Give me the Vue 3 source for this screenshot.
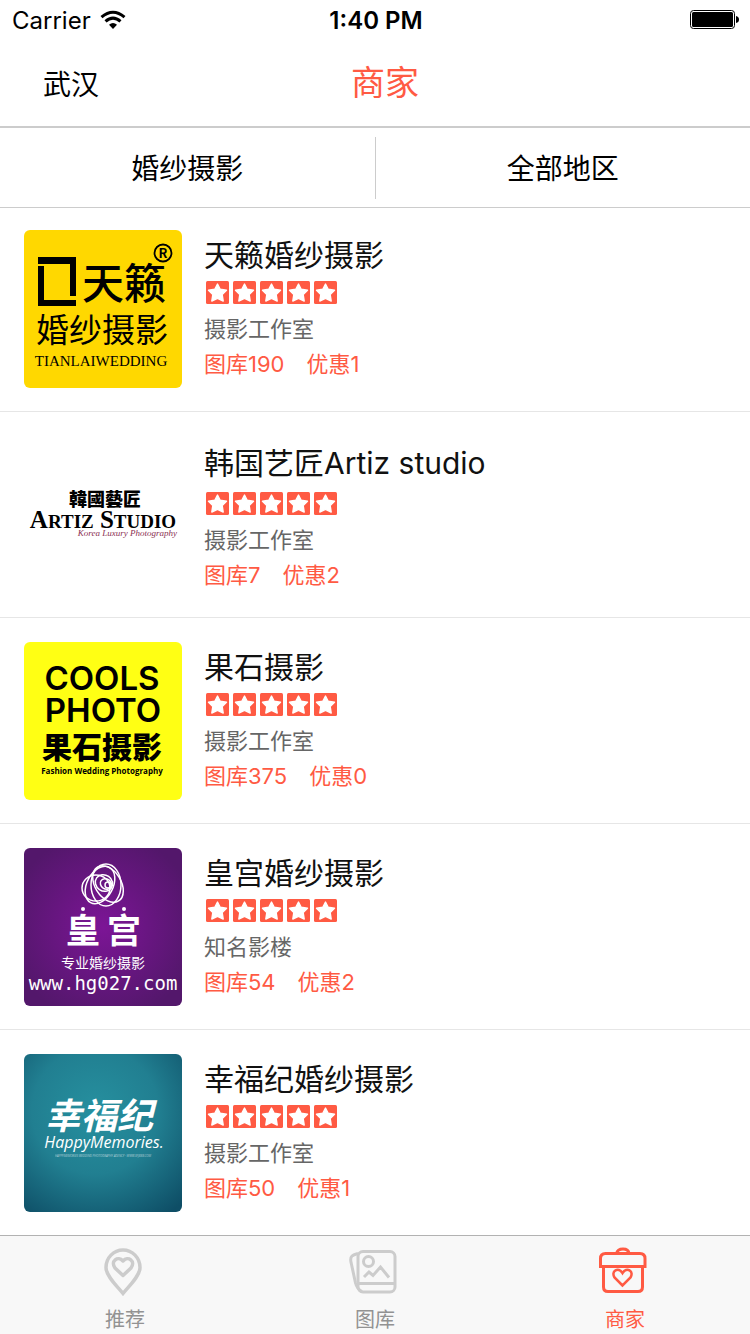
<script setup>
const shops = [
  { name: '天籁婚纱摄影', logo: 'tianlai', kind: '摄影工作室', photos: 190, deals: 1 },
  { name: '韩国艺匠Artiz studio', logo: 'artiz', kind: '摄影工作室', photos: 7, deals: 2, mixed: true },
  { name: '果石摄影', logo: 'cools', kind: '摄影工作室', photos: 375, deals: 0 },
  { name: '皇宫婚纱摄影', logo: 'palace', kind: '知名影楼', photos: 54, deals: 2 },
  { name: '幸福纪婚纱摄影', logo: 'happy', kind: '摄影工作室', photos: 50, deals: 1 },
]
</script>

<template>
  <div class="page">
    <header>
      <div class="status">
        <div class="carrier">
          <span>Carrier</span>
          <svg width="26" height="20" viewBox="0 0 26 20" aria-label="Wi-Fi">
            <path d="M1.500 7.200Q13-2.800 24.500 7.200" fill="none" stroke="#000" stroke-width="3" />
            <path d="M5.500 11.400Q13 4.800 20.500 11.400" fill="none" stroke="#000" stroke-width="3" />
            <path d="M9 14.800Q13 11 17 14.800L13 19Z" />
          </svg>
        </div>
        <time>1:40 PM</time>
        <div class="power">
          <svg width="50" height="20" viewBox="0 0 50 20" aria-label="Battery">
            <rect x=".5" y=".5" width="44" height="18" rx="3" fill="#fff" stroke="#000" />
            <rect x="2" y="2" width="41" height="15" rx="1.5" />
            <path d="M46 6Q49 6.500 49 9.500Q49 12.500 46 13Z" />
          </svg>
        </div>
      </div>
      <div class="nav">
        <button class="city" type="button">武汉</button>
        <h1>商家</h1>
        <span></span>
      </div>
    </header>

    <div class="filters">
      <button type="button">婚纱摄影</button>
      <i class="divider"></i>
      <button type="button">全部地区</button>
    </div>

    <ul class="shops">
      <li v-for="shop in shops" :key="shop.logo" :class="{ mixed: shop.mixed }">
        <svg v-if="shop.logo === 'tianlai'" class="logo" viewBox="0 0 158 158">
          <rect width="158" height="158" fill="#ffd800" />
          <path d="M14 27H52V66H46V34H14Z M14 36H20V70H52V76H14Z" />
          <text x="58" y="69" font-size="42" font-weight="500">天籁</text>
          <text x="12" y="112" font-size="33">婚纱摄影</text>
          <text class="serif" x="77" y="136" font-size="15" text-anchor="middle">TIANLAIWEDDING</text>
          <circle cx="139" cy="23" r="8.500" fill="none" stroke="#000" stroke-width="1.800" />
          <text x="139" y="28" font-size="13" font-weight="700" text-anchor="middle">R</text>
        </svg>
        <svg v-else-if="shop.logo === 'artiz'" class="logo" viewBox="0 0 158 158">
          <rect width="158" height="158" fill="#fff" />
          <text class="trad" x="81" y="70" font-size="18" font-weight="900" text-anchor="middle">韓國藝匠</text>
          <text class="serif" x="79" y="92" font-size="25" font-weight="700" text-anchor="middle">A<tspan font-size="19">RTIZ</tspan> S<tspan font-size="19">TUDIO</tspan></text>
          <text class="serif" x="153" y="100" font-size="9" font-style="italic" fill="#8b2f52" text-anchor="end">Korea Luxury Photography</text>
        </svg>
        <svg v-else-if="shop.logo === 'cools'" class="logo" viewBox="0 0 158 158">
          <rect width="158" height="158" fill="#ffff14" />
          <g text-anchor="middle">
            <text class="inter" x="78" y="48" font-size="33" font-weight="600">COOLS</text>
            <text class="inter" x="79" y="80" font-size="33" font-weight="600">PHOTO</text>
            <text x="78" y="116" font-size="30" font-weight="900">果石摄影</text>
            <text class="open" x="78" y="132" font-size="8" font-weight="700">Fashion Wedding Photography</text>
          </g>
        </svg>
        <svg v-else-if="shop.logo === 'palace'" class="logo" viewBox="0 0 158 158">
          <defs>
            <radialGradient id="violet" cx="50%" cy="50%" r="60%">
              <stop offset="0" stop-color="#7c1596" />
              <stop offset="1" stop-color="#53176b" />
            </radialGradient>
          </defs>
          <rect width="158" height="158" fill="url(#violet)" />
          <g fill="none" stroke="#fff" stroke-width="1.500">
            <ellipse cx="82" cy="37" rx="15" ry="21" />
            <ellipse cx="76" cy="37" rx="13" ry="20" transform="rotate(28 76 37)" />
            <ellipse cx="84" cy="36" rx="13" ry="20" transform="rotate(-32 84 36)" />
            <ellipse cx="72" cy="40" rx="14" ry="13" />
            <ellipse cx="80" cy="35" rx="9" ry="8" transform="rotate(35 80 35)" />
            <ellipse cx="82" cy="36" rx="6" ry="5" transform="rotate(35 82 36)" />
            <circle cx="84" cy="37" r="3" />
          </g>
          <g fill="#fff" text-anchor="middle">
            <circle cx="59" cy="61" r="2" />
            <circle cx="100" cy="61" r="2" />
            <text x="59" y="95" font-size="34" font-weight="700">皇</text>
            <text x="100" y="95" font-size="34" font-weight="700">宫</text>
            <text x="79" y="120" font-size="14">专业婚纱摄影</text>
            <text class="mono" x="79" y="142" font-size="19">www.hg027.com</text>
          </g>
        </svg>
        <svg v-else class="logo" viewBox="0 0 158 158">
          <defs>
            <radialGradient id="teal" cx="45%" cy="36%" r="80%">
              <stop offset="0" stop-color="#26909f" />
              <stop offset=".5" stop-color="#217f91" />
              <stop offset="1" stop-color="#0e4e66" />
            </radialGradient>
          </defs>
          <rect width="158" height="158" fill="url(#teal)" />
          <g fill="#fff" font-style="italic" text-anchor="middle">
            <text x="75" y="75" font-size="36" font-weight="700">幸福纪</text>
            <text class="open" x="80" y="94" font-size="16">HappyMemories.</text>
            <text class="open" x="79" y="103" font-size="3" opacity=".6">HAPPYMEMORIES WEDDING PHOTOGRAPHY AGENCY · WWW.XFJ888.COM</text>
          </g>
        </svg>

        <div class="info">
          <h2>{{ shop.name }}</h2>
          <div class="stars" role="img" aria-label="5">
            <svg v-for="n in 5" :key="n" width="23" height="23" viewBox="0 0 23 23">
              <rect width="23" height="23" rx="1.500" fill="#ff5a43" />
              <path d="M11.500 3L14.200 8.200L20.500 9.200L16.200 13.600L17.200 20L11.500 17.300L5.800 20L6.800 13.600L2.500 9.200L8.800 8.200Z" fill="#fff" stroke="#fff" stroke-width="1.400" stroke-linejoin="round" />
            </svg>
          </div>
          <p class="kind">{{ shop.kind }}</p>
          <p class="counts"><span>图库{{ shop.photos }}</span><span>优惠{{ shop.deals }}</span></p>
        </div>
      </li>
    </ul>

    <nav class="tabs">
      <a href="#recommend">
        <svg width="50" height="50" viewBox="0 0 50 50" fill="none" stroke="#ccc" stroke-width="3.500">
          <path d="M23 46.500C18 40 6 29.500 6 20.500A17 17.500 0 0 1 40 20.500C40 29.500 28 40 23 46.500Z" />
          <path d="M23 28.500L15 21C10 14 18 8.500 23 14C28 8.500 36 14 31 21Z" stroke-linejoin="round" />
        </svg>
        <span>推荐</span>
      </a>
      <a href="#gallery">
        <svg width="50" height="50" viewBox="0 0 50 50" fill="none" stroke="#ccc" stroke-width="3">
          <rect x="8" y="4.500" width="37" height="40.500" rx="5" />
          <path d="M8 36.500H45M8 6.500C2 8 -.5 9.500 1.200 16L5.500 36Q7 42 12 44.500" />
          <circle cx="18.500" cy="14.500" r="5" />
          <path d="M14 30L19 25L23 28.500L30.500 20L39 30.500" />
        </svg>
        <span>图库</span>
      </a>
      <a class="active" href="#shops" aria-current="page">
        <svg width="50" height="50" viewBox="0 0 50 50" fill="none" stroke="#ff5a43" stroke-width="3">
          <path d="M.5 19.500V11.500Q.5 6.500 5.500 6.500H40Q45 6.500 45 11.500V19.500Z" />
          <path d="M16.500 6.500Q17.500 2 23 2T29 6.500" />
          <path d="M3.500 19.500V40Q3.500 44.500 8 44.500H38Q42.500 44.500 42.500 40V19.500" />
          <path d="M22.500 38.500L14.500 30.500C10.500 24 18.500 19.500 22.500 26C26.500 19.500 34.500 24 30.500 30.500Z" stroke-width="2.500" />
        </svg>
        <span>商家</span>
      </a>
    </nav>
  </div>
</template>

<style>
body {
  background: #fff;
}
</style>

<style scoped>
.page {
  min-height: 100vh;
  display: flex;
  flex-direction: column;
  font-family: Inter, "Noto Sans CJK SC", sans-serif;
  color: #000;
}

h1, h2, p, ul {
  margin: 0;
  padding: 0;
  font-weight: 400;
}

button {
  border: 0;
  padding: 2px 0 0;
  background: none;
  color: inherit;
  font-family: inherit;
  font-size: 28px;
  line-height: 40px;
}

header {
  border-bottom: 2px solid #ccc;
}

.status,
.nav {
  display: grid;
  grid-template-columns: 1fr auto 1fr;
  align-items: center;
}

.status {
  height: 40px;
  padding: 0 10px 0 12px;
  font-size: 24px;
}

.carrier {
  display: flex;
  align-items: center;
  gap: 9px;
}

.status time {
  font-weight: 600;
}

.power {
  display: flex;
  justify-content: flex-end;
}

.nav {
  height: 86px;
  padding: 0 23px 0 43px;
}

.city {
  justify-self: start;
  padding-top: 4px;
}

.nav h1 {
  color: #ff5a43;
  font-size: 34px;
  line-height: 48px;
}

.filters {
  display: grid;
  grid-template-columns: 1fr 1px 1fr;
  height: 79px;
  border-bottom: 1px solid #ccc;
}

.divider {
  margin: 9px 0 8px;
  background: #ccc;
}

.shops {
  flex: 1;
  list-style: none;
}

.shops li {
  display: flex;
  gap: 22px;
  padding: 24px 24px 23px;
  border-bottom: 1px solid #e6e6e6;
}

.shops li:first-child {
  padding-top: 22px;
}

.shops li:last-child {
  border-bottom: 0;
}

.logo {
  width: 158px;
  height: 158px;
  flex: none;
  border-radius: 6px;
  font-family: "Noto Sans CJK SC", sans-serif;
}

.trad {
  font-family: "Noto Sans CJK TC", sans-serif;
}

.serif {
  font-family: "Liberation Serif", serif;
}

.inter {
  font-family: Inter, sans-serif;
}

.open {
  font-family: "Open Sans", sans-serif;
}

.mono {
  font-family: "DejaVu Sans Mono", monospace;
}

.info {
  padding-top: 5px;
}

.info h2 {
  font-size: 30px;
  line-height: 40px;
  color: #111;
}

.mixed h2 {
  line-height: 45px;
}

.stars {
  display: flex;
  gap: 4px;
  padding: 6px 2px 8px;
}

.kind,
.counts {
  font-size: 22px;
  line-height: 35px;
}

.kind {
  color: #666;
}

.counts {
  display: flex;
  gap: 22px;
  color: #ff5a43;
}

.tabs {
  display: grid;
  grid-template-columns: repeat(3, 1fr);
  height: 98px;
  border-top: 1px solid #b2b2b2;
  background: #f8f8f8;
}

.tabs a {
  display: flex;
  flex-direction: column;
  align-items: center;
  padding-top: 11px;
  color: #929292;
  font-size: 20px;
  line-height: 28px;
  text-decoration: none;
}

.tabs svg {
  overflow: visible;
}

.tabs span {
  margin-top: 9px;
}

.tabs .active {
  color: #ff5a43;
}
</style>
